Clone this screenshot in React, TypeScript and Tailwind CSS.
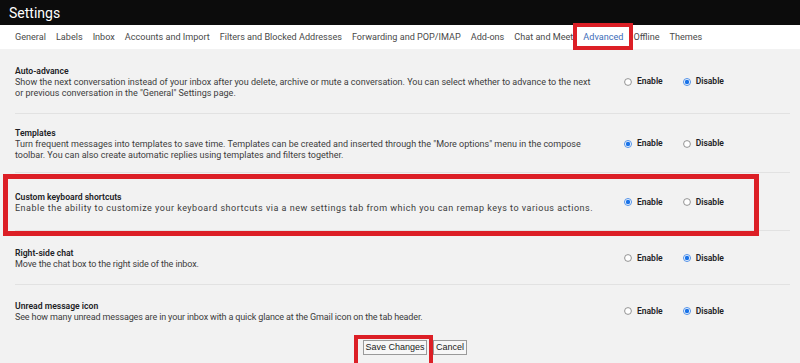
import React from "react";

const tabs = [
  "General",
  "Labels",
  "Inbox",
  "Accounts and Import",
  "Filters and Blocked Addresses",
  "Forwarding and POP/IMAP",
  "Add-ons",
  "Chat and Meet",
  "Advanced",
  "Offline",
  "Themes",
];

function Radio({ checked }: { checked: boolean }) {
  return checked ? (
    <svg width="8" height="8" viewBox="0 0 8 8" className="shrink-0">
      <circle cx="4" cy="4" r="3.5" fill="#ffffff" stroke="#4f8fe6" strokeWidth="1" />
      <circle cx="4" cy="4" r="2.2" fill="#1a73e8" />
    </svg>
  ) : (
    <svg width="8" height="8" viewBox="0 0 8 8" className="shrink-0">
      <circle cx="4" cy="4" r="3.4" fill="#ffffff" stroke="#7a7a7a" strokeWidth="0.8" />
    </svg>
  );
}

function Row({
  title,
  lines,
  enabled,
  h,
  descClass = "tracking-normal",
  border = true,
  boxed = false,
}: {
  title: string;
  lines: string[];
  enabled: boolean;
  h: string;
  descClass?: string;
  border?: boolean;
  boxed?: boolean;
}) {
  return (
    <div className={`relative flex items-center ${h}`}>
      <div className="w-[624px] shrink-0 pl-[15px]">
        <div className="text-[8.6px] leading-[12px] font-semibold text-[#202124] whitespace-nowrap">{title}</div>
        {lines.map((l, i) => (
          <div key={i} className={`text-[9px] leading-[11px] text-[#3c3c3c] whitespace-nowrap ${descClass}`}>
            {l}
          </div>
        ))}
      </div>
      <div className="flex items-center">
        <Radio checked={enabled} />
        <span className="ml-[5px] text-[8.5px] font-semibold text-[#202124]">Enable</span>
        <span className="ml-[20px]" />
        <Radio checked={!enabled} />
        <span className="ml-[5px] text-[8.5px] font-semibold text-[#202124]">Disable</span>
      </div>
      {border && <div className="absolute bottom-0 left-[15px] right-[10px] h-px bg-[#e2e2e2]" />}
      {boxed && (
        <div className="absolute left-[3px] top-[1px] w-[756px] h-[62px] border-[5px] border-[#dc1f26] pointer-events-none" />
      )}
    </div>
  );
}

export default function App() {
  return (
    <div
      className="w-[800px] h-[363px] overflow-hidden bg-[#f2f2f2] relative"
      style={{ fontFamily: "Roboto, 'Liberation Sans', sans-serif" }}
    >
      <div className="h-[25px] bg-[#0c0c0c] flex items-center pl-[9px]">
        <span className="text-white text-[14px] leading-none">Settings</span>
      </div>
      <div className="h-[24px] bg-white flex items-center pl-[15px] gap-[10px]">
        {tabs.map((t) =>
          t === "Advanced" ? (
            <span key={t} className="relative text-[9.1px] leading-[12px] text-[#3d6cb8] whitespace-nowrap">
              {t}
              <span className="absolute left-[-10px] right-[-10px] top-[-8px] h-[27px] border-[4px] border-[#dc1f26]" />
            </span>
          ) : (
            <span key={t} className="text-[9.1px] leading-[12px] text-[#4a4a4a] whitespace-nowrap">
              {t}
            </span>
          )
        )}
      </div>
      <Row
        h="h-[65px]"
        title="Auto-advance"
        lines={[
          "Show the next conversation instead of your inbox after you delete, archive or mute a conversation. You can select whether to advance to the next",
          'or previous conversation in the "General" Settings page.',
        ]}
        enabled={false}
      />
      <Row
        h="h-[59px]"
        title="Templates"
        lines={[
          'Turn frequent messages into templates to save time. Templates can be created and inserted through the "More options" menu in the compose',
          "toolbar. You can also create automatic replies using templates and filters together.",
        ]}
        enabled={true}
      />
      <Row
        h="h-[58px]"
        title="Custom keyboard shortcuts"
        lines={[
          "Enable the ability to customize your keyboard shortcuts via a new settings tab from which you can remap keys to various actions.",
        ]}
        descClass="tracking-[0.5px]"
        enabled={true}
        boxed
      />
      <Row
        h="h-[54px]"
        title="Right-side chat"
        lines={["Move the chat box to the right side of the inbox."]}
        descClass="tracking-[-0.12px]"
        enabled={false}
      />
      <Row
        h="h-[52px]"
        title="Unread message icon"
        lines={["See how many unread messages are in your inbox with a quick glance at the Gmail icon on the tab header."]}
        descClass="tracking-[-0.14px]"
        enabled={false}
        border={false}
      />
      <div
        className="flex items-start pl-[363px] pt-[3px] gap-[6px]"
        style={{ fontFamily: "'Liberation Sans', Arial, sans-serif" }}
      >
        <div className="relative">
          <div className="h-[15px] w-[64px] border border-[#9a9a9a] bg-[#f7f7f7] text-[9px] leading-[13px] text-center whitespace-nowrap text-[#222]">
            Save Changes
          </div>
          <div className="absolute left-[-9px] top-[-5px] w-[79px] h-[40px] border-[4px] border-[#dc1f26]" />
        </div>
        <div className="h-[15px] w-[34px] border border-[#9a9a9a] bg-[#f7f7f7] text-[9px] leading-[13px] text-center whitespace-nowrap text-[#222]">
          Cancel
        </div>
      </div>
    </div>
  );
}
